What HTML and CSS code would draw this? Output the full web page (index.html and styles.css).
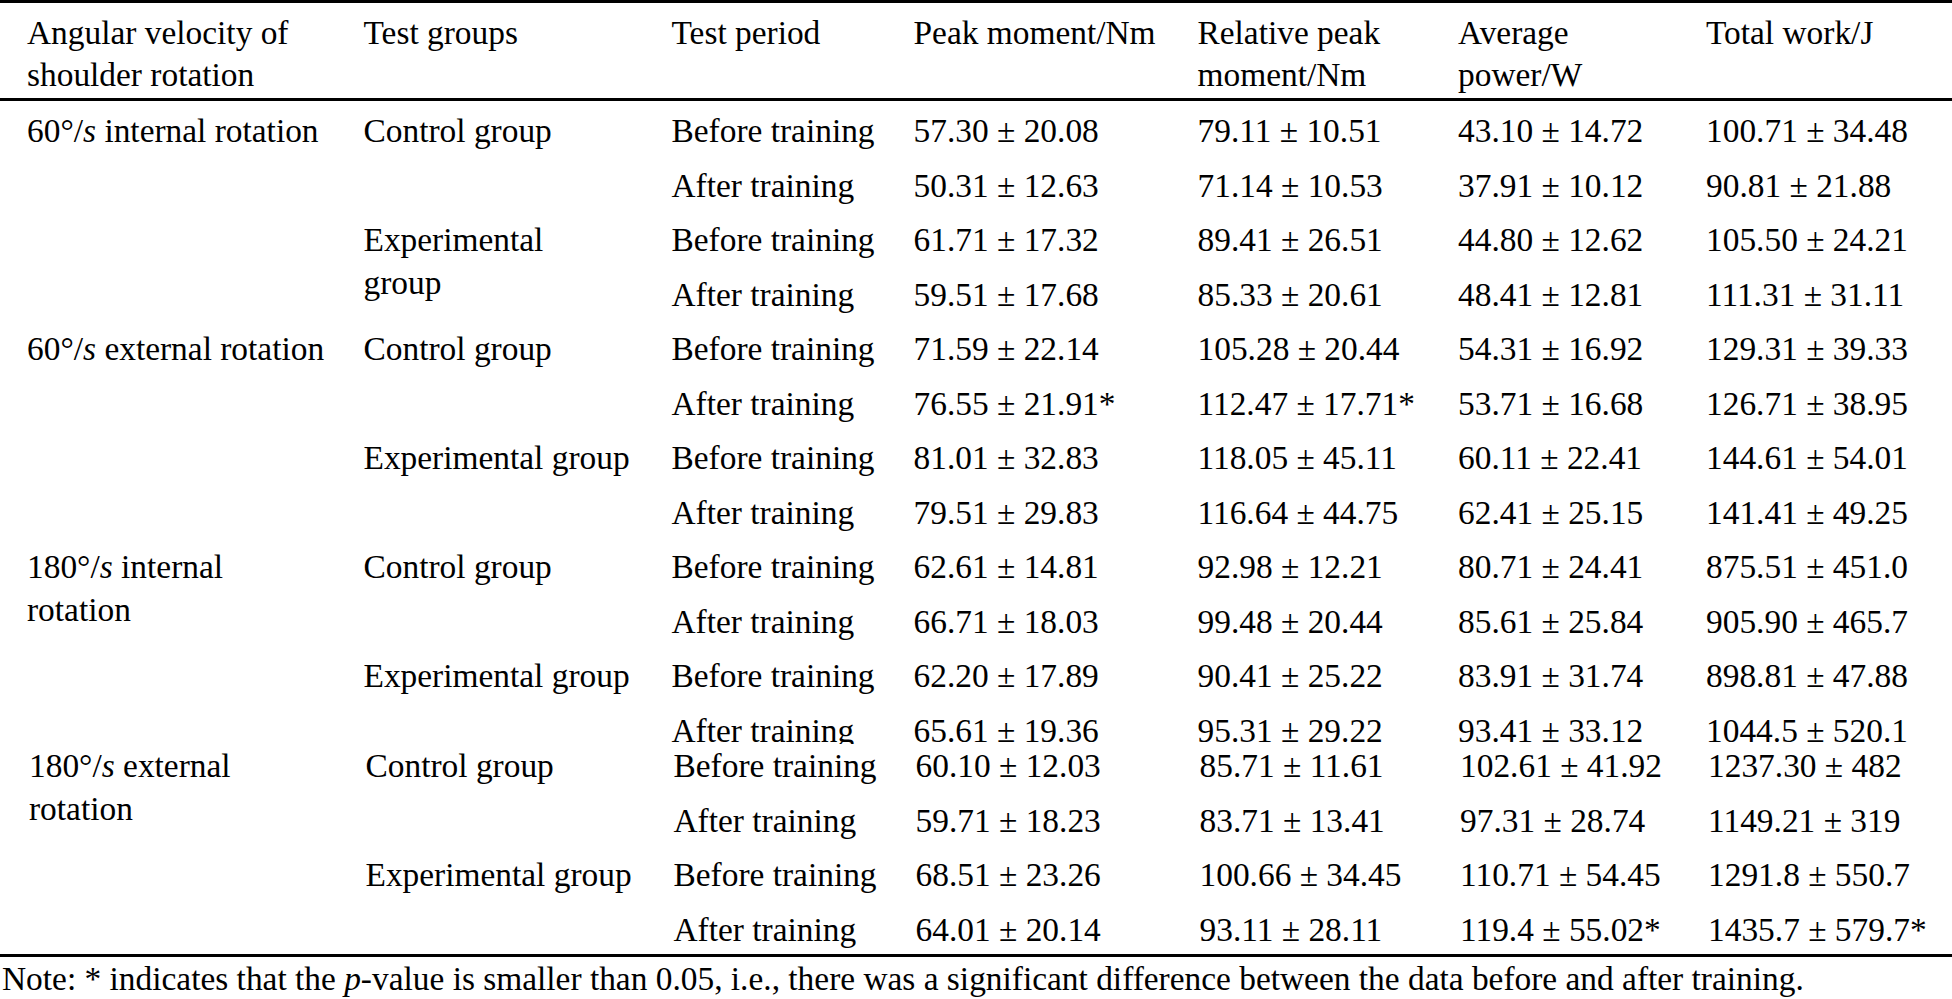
FILE: index.html
```html
<!DOCTYPE html>
<html lang="en">
<head>
<meta charset="utf-8">
<title>Shoulder rotation isokinetic test results</title>
<link rel="stylesheet" href="styles.css">
</head>
<body>
<div class="page">
  <div class="block block-top">
    <div class="grid thead">
      <div class="hc c1">Angular velocity of<br>shoulder rotation</div>
      <div class="hc c2">Test groups</div>
      <div class="hc c3">Test period</div>
      <div class="hc c4">Peak moment/Nm</div>
      <div class="hc c5">Relative peak<br>moment/Nm</div>
      <div class="hc c6">Average<br>power/W</div>
      <div class="hc c7">Total work/J</div>
    </div>
    <div class="grid tbody">
      <div class="td c1 span4">60°/<i>s</i> internal rotation</div>
      <div class="td c2 span2">Control group</div>
      <div class="td c3">Before training</div>
      <div class="td c4">57.30 ± 20.08</div>
      <div class="td c5">79.11 ± 10.51</div>
      <div class="td c6">43.10 ± 14.72</div>
      <div class="td c7">100.71 ± 34.48</div>

      <div class="td c3">After training</div>
      <div class="td c4">50.31 ± 12.63</div>
      <div class="td c5">71.14 ± 10.53</div>
      <div class="td c6">37.91 ± 10.12</div>
      <div class="td c7">90.81 ± 21.88</div>

      <div class="td c2 span2">Experimental<br>group</div>
      <div class="td c3">Before training</div>
      <div class="td c4">61.71 ± 17.32</div>
      <div class="td c5">89.41 ± 26.51</div>
      <div class="td c6">44.80 ± 12.62</div>
      <div class="td c7">105.50 ± 24.21</div>

      <div class="td c3">After training</div>
      <div class="td c4">59.51 ± 17.68</div>
      <div class="td c5">85.33 ± 20.61</div>
      <div class="td c6">48.41 ± 12.81</div>
      <div class="td c7">111.31 ± 31.11</div>

      <div class="td c1 span4">60°/<i>s</i> external rotation</div>
      <div class="td c2 span2">Control group</div>
      <div class="td c3">Before training</div>
      <div class="td c4">71.59 ± 22.14</div>
      <div class="td c5">105.28 ± 20.44</div>
      <div class="td c6">54.31 ± 16.92</div>
      <div class="td c7">129.31 ± 39.33</div>

      <div class="td c3">After training</div>
      <div class="td c4">76.55 ± 21.91*</div>
      <div class="td c5">112.47 ± 17.71*</div>
      <div class="td c6">53.71 ± 16.68</div>
      <div class="td c7">126.71 ± 38.95</div>

      <div class="td c2 span2">Experimental group</div>
      <div class="td c3">Before training</div>
      <div class="td c4">81.01 ± 32.83</div>
      <div class="td c5">118.05 ± 45.11</div>
      <div class="td c6">60.11 ± 22.41</div>
      <div class="td c7">144.61 ± 54.01</div>

      <div class="td c3">After training</div>
      <div class="td c4">79.51 ± 29.83</div>
      <div class="td c5">116.64 ± 44.75</div>
      <div class="td c6">62.41 ± 25.15</div>
      <div class="td c7">141.41 ± 49.25</div>

      <div class="td c1 span4">180°/<i>s</i> internal<br>rotation</div>
      <div class="td c2 span2">Control group</div>
      <div class="td c3">Before training</div>
      <div class="td c4">62.61 ± 14.81</div>
      <div class="td c5">92.98 ± 12.21</div>
      <div class="td c6">80.71 ± 24.41</div>
      <div class="td c7">875.51 ± 451.0</div>

      <div class="td c3">After training</div>
      <div class="td c4">66.71 ± 18.03</div>
      <div class="td c5">99.48 ± 20.44</div>
      <div class="td c6">85.61 ± 25.84</div>
      <div class="td c7">905.90 ± 465.7</div>

      <div class="td c2 span2">Experimental group</div>
      <div class="td c3">Before training</div>
      <div class="td c4">62.20 ± 17.89</div>
      <div class="td c5">90.41 ± 25.22</div>
      <div class="td c6">83.91 ± 31.74</div>
      <div class="td c7">898.81 ± 47.88</div>

      <div class="td c3">After training</div>
      <div class="td c4">65.61 ± 19.36</div>
      <div class="td c5">95.31 ± 29.22</div>
      <div class="td c6">93.41 ± 33.12</div>
      <div class="td c7">1044.5 ± 520.1</div>
    </div>
  </div>

  <div class="grid block block-bottom">
    <div class="td c1 span4">180°/<i>s</i> external<br>rotation</div>
    <div class="td c2 span2">Control group</div>
    <div class="td c3">Before training</div>
    <div class="td c4">60.10 ± 12.03</div>
    <div class="td c5">85.71 ± 11.61</div>
    <div class="td c6">102.61 ± 41.92</div>
    <div class="td c7">1237.30 ± 482</div>

    <div class="td c3">After training</div>
    <div class="td c4">59.71 ± 18.23</div>
    <div class="td c5">83.71 ± 13.41</div>
    <div class="td c6">97.31 ± 28.74</div>
    <div class="td c7">1149.21 ± 319</div>

    <div class="td c2 span2">Experimental group</div>
    <div class="td c3">Before training</div>
    <div class="td c4">68.51 ± 23.26</div>
    <div class="td c5">100.66 ± 34.45</div>
    <div class="td c6">110.71 ± 54.45</div>
    <div class="td c7">1291.8 ± 550.7</div>

    <div class="td c3">After training</div>
    <div class="td c4">64.01 ± 20.14</div>
    <div class="td c5">93.11 ± 28.11</div>
    <div class="td c6">119.4 ± 55.02*</div>
    <div class="td c7">1435.7 ± 579.7*</div>
  </div>

  <p class="note">Note: * indicates that the <i>p</i>-value is smaller than 0.05, i.e., there was a significant difference between the data before and after training.</p>
</div>
</body>
</html>
```

FILE: styles.css
```css
html, body {
  margin: 0;
  padding: 0;
  background: #ffffff;
}

.page {
  width: 1952px;
  height: 999px;
  overflow: hidden;
  font-family: "Liberation Serif", "Times New Roman", serif;
  font-size: 33.4px;
  color: #000000;
}

.grid {
  display: grid;
  grid-template-columns: 336.5px 308px 242px 284px 260.5px 248px 1fr;
  padding-left: 27px;
}

.block-top {
  height: 744px;
  overflow: hidden;
  border-top: 3px solid #000;
  box-sizing: border-box;
}

.thead {
  padding-top: 9px;
  padding-bottom: 1.5px;
  border-bottom: 3px solid #000;
  line-height: 42px;
}

.hc {
  white-space: nowrap;
}

.tbody {
  grid-template-rows: repeat(12, 54.5px);
  line-height: 43px;
}

.tbody .td {
  padding-top: 8.5px;
}

.block-bottom {
  padding-left: 29px;
  grid-template-rows: 54.5px 54.5px 54.5px 46.5px;
  line-height: 43px;
  border-bottom: 3px solid #000;
}

.td {
  white-space: nowrap;
}

.c1 { grid-column: 1; }
.c2 { grid-column: 2; }
.c3 { grid-column: 3; }
.c4 { grid-column: 4; }
.c5 { grid-column: 5; }
.c6 { grid-column: 6; }
.c7 { grid-column: 7; }

.span2 { grid-row: span 2; }
.span4 { grid-row: span 4; }

.note {
  margin: 0;
  padding-left: 2px;
  line-height: 43px;
  white-space: nowrap;
}
```
